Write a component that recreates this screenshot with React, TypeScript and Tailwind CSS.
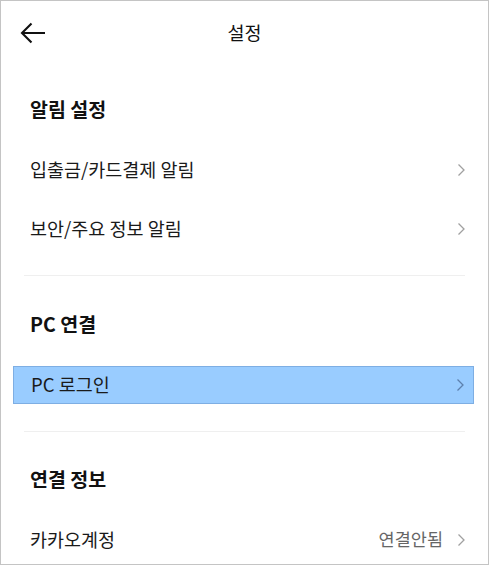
const font = { fontFamily: '"Noto Sans CJK KR", "Noto Sans", sans-serif' };

function Chevron({ className = "text-[#a0a0a0]" }: { className?: string }) {
  return (
    <svg width="9" height="14" viewBox="0 0 9 14" className={className}>
      <path d="M1.5 1.5 L7 7 L1.5 12.5" fill="none" stroke="currentColor" strokeWidth="1.3" />
    </svg>
  );
}

function SectionHeader({ title }: { title: string }) {
  return (
    <div className="h-[63px] flex items-center pl-[29px] text-[19.5px] font-bold text-[#111]">
      {title}
    </div>
  );
}

function Row({ label, value, active }: { label: string; value?: string; active?: boolean }) {
  return (
    <div className="h-[59px] flex items-center">
      <div
        className={
          active
            ? "ml-[12px] mr-[14px] flex-1 h-[38px] flex items-center justify-between pl-[17px] pr-[8px] bg-[#99ccff] border border-[#7eaee3]"
            : "flex-1 flex items-center justify-between pl-[29px] pr-[22px]"
        }
      >
        <span className="text-[18.5px] text-[#1a1a1a]">{label}</span>
        <span className="flex items-center gap-[14px]">
          {value && <span className="text-[17.5px] text-[#666]">{value}</span>}
          <Chevron className={active ? "text-[#5d80ad]" : "text-[#a0a0a0]"} />
        </span>
      </div>
    </div>
  );
}

function Divider() {
  return <div className="mx-[23px] h-px bg-[#efefef]" />;
}

export default function App() {
  return (
    <div style={font} className="w-[490px] h-[566px] bg-white">
      <div className="w-[489px] h-[565px] border border-[#c4c4c4] overflow-hidden">
        <header className="h-[64px] relative flex items-center justify-center">
          <button className="absolute left-[19px] top-[20px]">
            <svg width="26" height="24" viewBox="0 0 26 24">
              <path d="M2 12 H25 M11.5 2.5 L2 12 L11.5 21.5" fill="none" stroke="#111" strokeWidth="2.1" />
            </svg>
          </button>
          <h1 className="text-[18.5px] text-[#111]">설정</h1>
        </header>

        <div className="pt-[12px]">
          <SectionHeader title="알림 설정" />
          <Row label="입출금/카드결제 알림" />
          <Row label="보안/주요 정보 알림" />
        </div>

        <div className="h-[17px]" />
        <Divider />
        <div className="h-[16px]" />

        <SectionHeader title="PC 연결" />
        <Row label="PC 로그인" active />

        <div className="h-[17px]" />
        <Divider />
        <div className="h-[15px]" />

        <SectionHeader title="연결 정보" />
        <Row label="카카오계정" value="연결안됨" />
      </div>
    </div>
  );
}
